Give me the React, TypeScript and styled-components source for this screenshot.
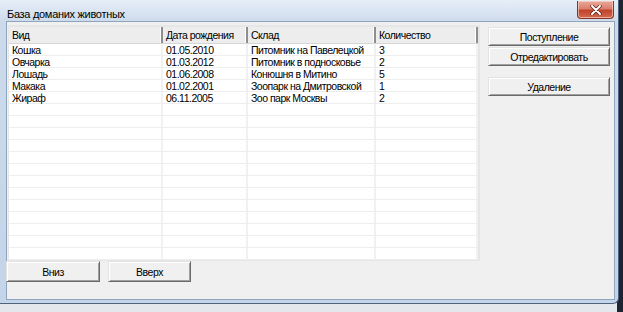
import React from "react";
import styled, { createGlobalStyle } from "styled-components";

const Global = createGlobalStyle`
  html, body { margin: 0; padding: 0; }
  body {
    width: 623px;
    height: 312px;
    overflow: hidden;
    background: linear-gradient(90deg, #e4e8ec 0%, #e4e8ec 99%, #1e2532 99%);
    font-family: "Liberation Sans", Arial, sans-serif;
  }
`;

const Window = styled.div`
  width: 619px;
  height: 304px;
  box-sizing: border-box;
  display: flex;
  flex-direction: column;
  background: linear-gradient(180deg, #e6eef8 0px, #d9e4f1 12px, #ccdaeb 22px, #c4d5e9 100%);
  border-right: 1px solid #4f637c;
  border-bottom: 1px solid #4f637c;
  border-bottom-right-radius: 6px;
  padding: 0 3px 3px 6px;
`;

const TitleBar = styled.div`
  height: 21px;
  display: flex;
  align-items: flex-start;
  justify-content: space-between;
`;

const Title = styled.div`
  font-family: "Liberation Sans", Arial, sans-serif;
  font-size: 11px;
  color: #000;
  padding: 8px 0 0 1px;
  letter-spacing: -0.3px;
`;

const CloseButton = styled.div`
  width: 37px;
  height: 18px;
  margin: 1px 1px 0 0;
  box-sizing: border-box;
  border: 1px solid #8a3325;
  border-top: none;
  border-radius: 0 0 4px 4px;
  background: linear-gradient(180deg, #eaa99c 0%, #d9806e 45%, #c3432b 55%, #cf6a4f 100%);
  box-shadow: inset 0 0 0 1px rgba(255, 220, 210, 0.6);
  display: flex;
  align-items: center;
  justify-content: center;
`;

const Client = styled.div`
  flex: 1;
  background: #f0f0f0;
  border: 1px solid #8fa4bd;
  display: flex;
  padding: 3px 0 0 0;
`;

const LeftCol = styled.div`
  width: 473px;
  display: flex;
  flex-direction: column;
`;

const Grid = styled.div`
  margin-left: 1px;
  height: 236px;
  box-sizing: border-box;
  background: #fff;
  border: 2px solid #e6e6e6;
  border-left-width: 1px;
  border-bottom-width: 1px;
  overflow: hidden;
  font-family: "Liberation Sans", Arial, sans-serif;
  font-size: 10.5px;
  letter-spacing: -0.5px;
  color: #000;
`;

const cols = "154px 85px 128px 102px";

const HeaderRow = styled.div`
  display: grid;
  grid-template-columns: ${cols};
  height: 16px;
  background: #ededed;
  border-bottom: 1px solid #d6d6d6;
`;

const HeaderCell = styled.div`
  padding: 2px 0 0 3px;
  border-right: 2px solid #8e8e8e;
  box-shadow: inset -1px 0 0 #fff;
  line-height: 12px;
  white-space: nowrap;
`;

const Row = styled.div`
  display: grid;
  grid-template-columns: ${cols};
  height: 11px;
  border-bottom: 1px solid #eeeeee;
`;

const Cell = styled.div`
  padding: 1px 0 0 3px;
  border-right: 2px solid #f1f1f1;
  line-height: 10px;
  white-space: nowrap;
`;

const BottomBar = styled.div`
  display: flex;
  gap: 8px;
  margin-left: -1px;
`;

const Btn = styled.button<{ $w: number; $h: number }>`
  width: ${(p) => p.$w}px;
  height: ${(p) => p.$h}px;
  padding: 0;
  box-sizing: border-box;
  background: #f0f0f0;
  border-top: 1px solid #e3e3e3;
  border-left: 1px solid #e3e3e3;
  border-right: 1px solid #6a6a6a;
  border-bottom: 1px solid #6a6a6a;
  box-shadow: inset 1px 1px 0 #fff, inset -1px -1px 0 #a0a0a0;
  font-family: "Liberation Sans", Arial, sans-serif;
  font-size: 10.5px;
  letter-spacing: -0.5px;
  color: #000;
  display: flex;
  align-items: center;
  justify-content: center;
`;

const RightCol = styled.div`
  margin-left: 8px;
  padding-top: 2px;
  display: flex;
  flex-direction: column;
  align-items: flex-start;
`;

const Gap = styled.div<{ $h: number }>`
  height: ${(p) => p.$h}px;
`;

const data: [string, string, string, string][] = [
  ["Кошка", "01.05.2010", "Питомник на Павелецкой", "3"],
  ["Овчарка", "01.03.2012", "Питомник в подносковье", "2"],
  ["Лошадь", "01.06.2008", "Конюшня в Митино", "5"],
  ["Макака", "01.02.2001", "Зоопарк на Дмитровской", "1"],
  ["Жираф", "06.11.2005", "Зоо парк Москвы", "2"],
];

const rows = [...data, ...Array.from({ length: 13 }, () => ["", "", "", ""] as [string, string, string, string])];

export default function App() {
  return (
    <>
      <Global />
      <Window>
        <TitleBar>
          <Title>База доманих животных</Title>
          <CloseButton>
            <svg width="12" height="10" viewBox="0 0 12 10">
              <path d="M2 1 L10 9 M10 1 L2 9" stroke="#5a1f16" strokeWidth="3.4" strokeLinecap="round" />
              <path d="M2 1 L10 9 M10 1 L2 9" stroke="#fff" strokeWidth="2" strokeLinecap="round" />
            </svg>
          </CloseButton>
        </TitleBar>
        <Client>
          <LeftCol>
            <Grid>
              <HeaderRow>
                <HeaderCell>Вид</HeaderCell>
                <HeaderCell>Дата рождения</HeaderCell>
                <HeaderCell>Склад</HeaderCell>
                <HeaderCell>Количество</HeaderCell>
              </HeaderRow>
              {rows.map((r, i) => (
                <Row key={i}>
                  {r.map((c, j) => (
                    <Cell key={j}>{c}</Cell>
                  ))}
                </Row>
              ))}
            </Grid>
            <BottomBar>
              <Btn $w={94} $h={21}>Вниз</Btn>
              <Btn $w={83} $h={21}>Вверх</Btn>
            </BottomBar>
          </LeftCol>
          <RightCol>
            <Btn $w={122} $h={19}>Поступление</Btn>
            <Gap $h={1} />
            <Btn $w={122} $h={19}>Отредактировать</Btn>
            <Gap $h={11} />
            <Btn $w={122} $h={19}>Удаление</Btn>
          </RightCol>
        </Client>
      </Window>
    </>
  );
}
